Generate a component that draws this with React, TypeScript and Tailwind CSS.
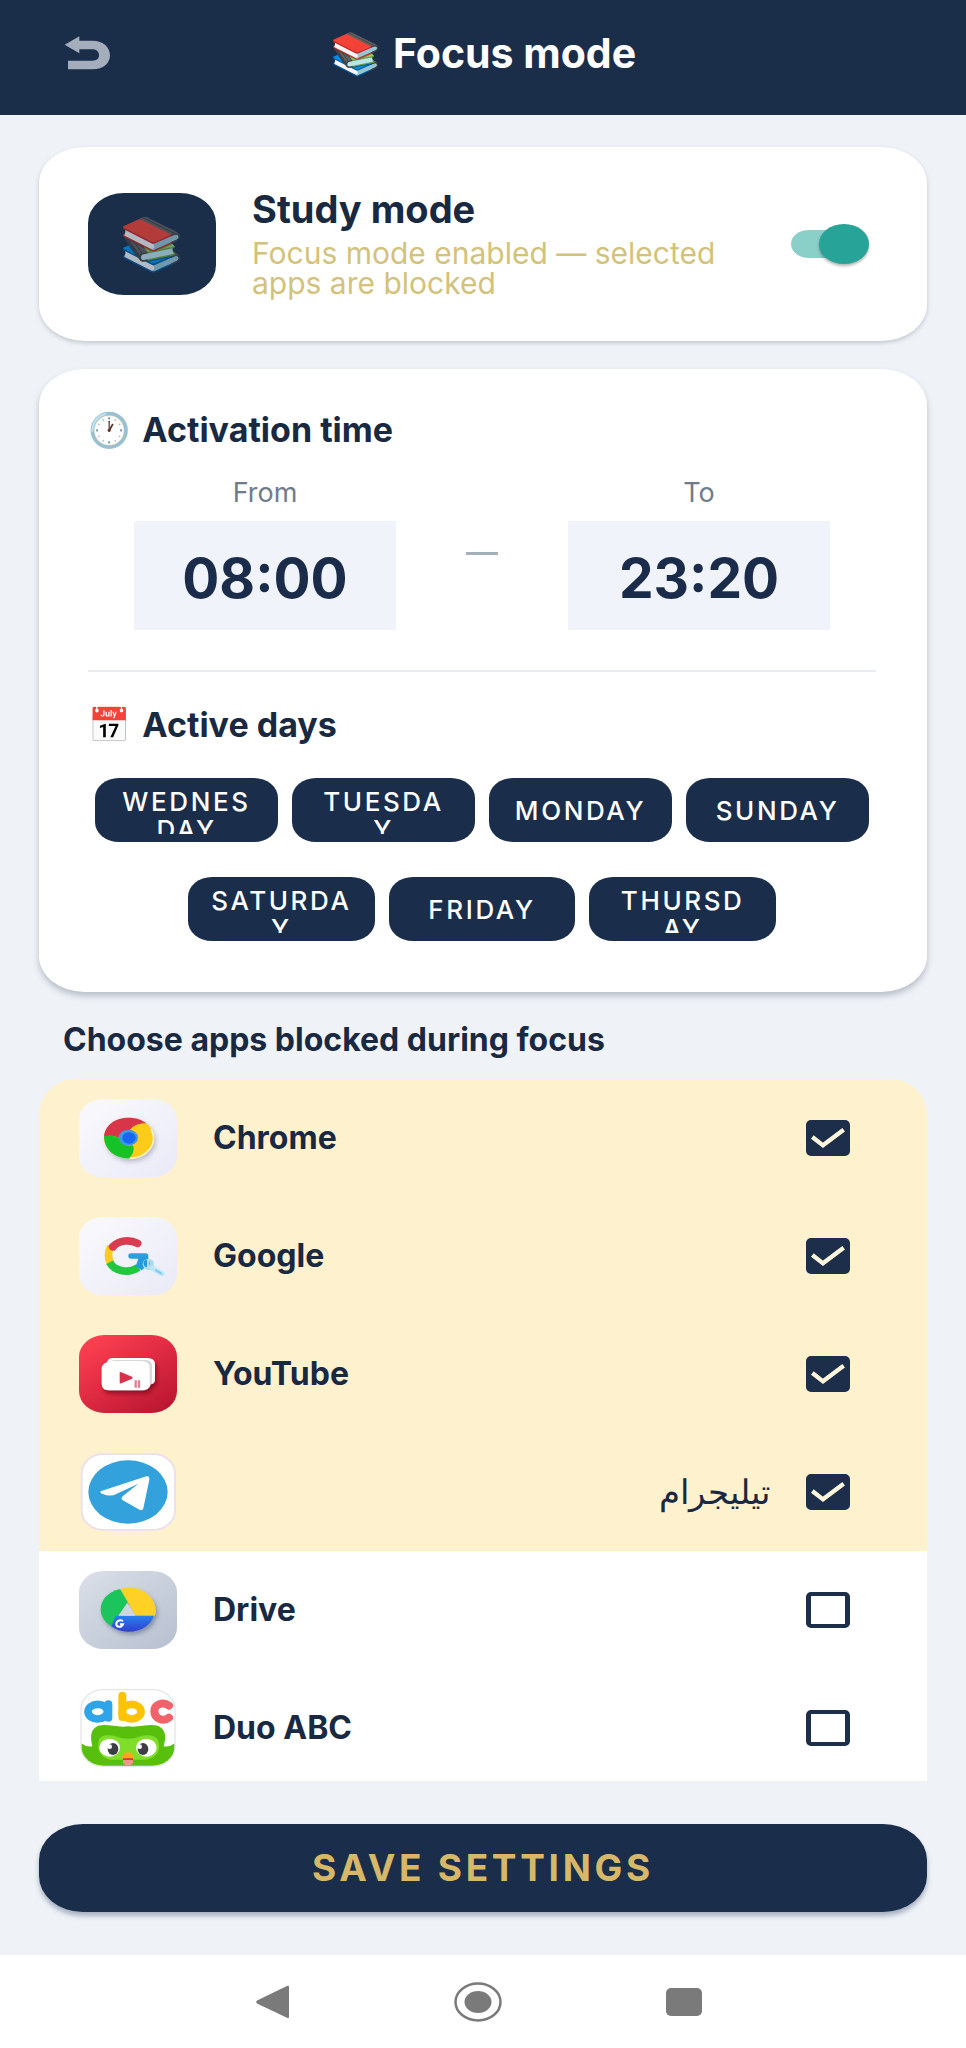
import { useState, type ReactNode } from "react";

type AppEntry = { id: string; name: ReactNode; rtl?: boolean; icon: ReactNode };

function BackIcon() {
  return (
    <svg viewBox="0 0 138 102" className="h-[34px] w-[46px]" aria-hidden="true">
      <path d="M2 26 46 1V14H86C118 14 138 34 138 58S118 100 86 100H12V74H84C99 74 105 68 105 58S99 40 84 40H46V52Z" fill="#a3adbc" />
    </svg>
  );
}

function ChromeIcon() {
  return (
    <svg viewBox="0 0 294 234" className="h-[78px] w-[98px]" aria-hidden="true">
      <defs>
        <linearGradient id="chromeTile" x1="0" y1="0" x2="1" y2="1">
          <stop offset="0" stopColor="#fafafd" />
          <stop offset="1" stopColor="#e9eaf6" />
        </linearGradient>
        <filter id="soft" x="-30%" y="-30%" width="170%" height="170%">
          <feDropShadow dx="7" dy="9" stdDeviation="8" floodColor="#6b6f90" floodOpacity="0.45" />
        </filter>
      </defs>
      <rect width="294" height="234" rx="72" ry="62" fill="url(#chromeTile)" />
      <g filter="url(#soft)">
        <ellipse cx="149" cy="117" rx="74" ry="61" fill="#fdc914" />
        <path d="M75 113C78 77 110 56 149 56 170 56 190 62 203 74 178 72 158 82 152 96L122 118C112 110 94 108 75 113Z" fill="#d9354a" />
        <path d="M75 112C94 108 112 110 122 118 126 136 140 143 162 139 168 153 160 170 150 178 108 178 76 154 75 112Z" fill="#14c228" />
      </g>
      <path d="M152 94C164 78 184 72 203 74 225 88 228 125 216 145 200 168 175 178 152 178 166 165 168 150 162 136Z" fill="#fdcb1a" />
      <path d="M216 90C232 120 222 150 192 168 178 176 166 178 152 178" fill="none" stroke="#fff3bd" strokeWidth="5" />
      <ellipse cx="148" cy="116" rx="29" ry="24" fill="#3f97ea" />
      <ellipse cx="150" cy="117" rx="20" ry="17" fill="#1767f2" />
    </svg>
  );
}

function GoogleIcon() {
  return (
    <svg viewBox="0 0 294 234" className="h-[78px] w-[98px]" aria-hidden="true">
      <defs>
        <linearGradient id="googleTile" x1="0" y1="0" x2="1" y2="1">
          <stop offset="0" stopColor="#fafafd" />
          <stop offset="1" stopColor="#e9eaf6" />
        </linearGradient>
      </defs>
      <rect width="294" height="234" rx="72" ry="62" fill="url(#googleTile)" />
      <g fill="none" strokeWidth="23">
        <path d="M95 88C87 105 86 122 94 138" stroke="#fccb22" />
        <path d="M92 136C106 163 148 171 178 151" stroke="#1fc83e" />
        <path d="M101 89C120 69 153 67 176 79" stroke="#d93b4f" strokeLinecap="round" />
      </g>
      <path d="M92 93 100 81 117 89 107 101Z" fill="#d93b4f" />
      <path d="M156 117H200" stroke="#2f9fdc" strokeWidth="16" strokeLinecap="round" />
      <path d="M180 120H208V142L188 160 170 148Z" fill="#249bdd" />
      <circle cx="208" cy="142" r="17" fill="#a6dcf4" />
      <ellipse cx="203" cy="139" rx="9" ry="11" fill="#2797df" />
      <path d="M207 128V151" stroke="#fff" strokeWidth="4" />
      <path d="M219 153 249 170" stroke="#bfe6f5" strokeWidth="15" strokeLinecap="round" />
      <path d="M231 160 246 169" stroke="#7cccec" strokeWidth="6" strokeLinecap="round" />
    </svg>
  );
}

function YouTubeIcon() {
  return (
    <svg viewBox="0 0 294 234" className="h-[78px] w-[98px]" aria-hidden="true">
      <defs>
        <linearGradient id="ytTile" x1="0.1" y1="0" x2="0.9" y2="1">
          <stop offset="0" stopColor="#ff4252" />
          <stop offset="0.5" stopColor="#de2a42" />
          <stop offset="1" stopColor="#b81530" />
        </linearGradient>
        <filter id="ytShadow" x="-30%" y="-30%" width="170%" height="190%">
          <feDropShadow dx="6" dy="10" stdDeviation="7" floodColor="#6a0018" floodOpacity="0.6" />
        </filter>
      </defs>
      <rect width="294" height="234" rx="76" ry="66" fill="url(#ytTile)" />
      <path d="M100 69H204Q228 69 228 88V133Q228 146 215 148Q210 166 190 166H92Q68 166 68 146V103Q68 86 84 82Q88 69 100 69Z" fill="#fff" filter="url(#ytShadow)" />
      <path d="M98 78H186Q212 78 212 98V147H219V94Q219 75 200 75H104Z" fill="#d8d8de" />
      <path d="M122 113Q122 110 127 112L159 125Q163 128 159 131L127 145Q122 147 122 142Z" fill="#d9314a" />
      <path d="M170 136V158M180 136V158" stroke="#e0808e" strokeWidth="7" />
    </svg>
  );
}

function TelegramIcon() {
  return (
    <svg viewBox="0 0 294 234" className="h-[78px] w-[98px]" aria-hidden="true">
      <rect x="8" y="3" width="280" height="228" rx="66" ry="58" fill="#fff" stroke="#ece1ea" strokeWidth="6" />
      <ellipse cx="147" cy="117" rx="119" ry="95" fill="#33a1dc" />
      <path d="M65 115 202 70Q212 68 211 80L193 166Q190 176 179 169L130 141Q125 136 131 130L178 92 110 124Q95 132 69 122Q61 118 65 115Z" fill="#fff" />
    </svg>
  );
}

function DriveIcon() {
  return (
    <svg viewBox="0 0 294 234" className="h-[78px] w-[98px]" aria-hidden="true">
      <defs>
        <linearGradient id="driveTile" x1="0" y1="0" x2="1" y2="1">
          <stop offset="0" stopColor="#dbe0e8" />
          <stop offset="1" stopColor="#b7c0d0" />
        </linearGradient>
        <linearGradient id="driveBlue" x1="0" y1="0" x2="0" y2="1">
          <stop offset="0" stopColor="#2b80ee" />
          <stop offset="1" stopColor="#2f3fd0" />
        </linearGradient>
        <filter id="driveShadow" x="-30%" y="-30%" width="170%" height="170%">
          <feDropShadow dx="6" dy="9" stdDeviation="7" floodColor="#4b5878" floodOpacity="0.5" />
        </filter>
      </defs>
      <rect width="294" height="234" rx="74" ry="64" fill="url(#driveTile)" />
      <g filter="url(#driveShadow)">
        <path d="M124 54C84 62 64 90 65 117 66 140 80 155 97 166L148 96Z" fill="#1fc45b" />
        <path d="M124 54Q134 50 150 50C195 50 230 80 230 122Q230 134 224 134H170Z" fill="#ffd128" />
        <path d="M110 134H224C218 160 188 182 148 182 128 182 110 176 97 166Z" fill="url(#driveBlue)" />
      </g>
      <path d="M145 95 169 134H118Z" fill="#cfd6df" />
      <path d="M132 150C122 144 111 151 112 160S127 171 132 160H123" fill="none" stroke="#fff" strokeWidth="6" />
    </svg>
  );
}

function DuoIcon() {
  return (
    <svg viewBox="0 0 294 234" className="h-[78px] w-[98px]" aria-hidden="true">
      <defs>
        <clipPath id="duoClip">
          <rect x="8" y="4" width="278" height="226" rx="66" ry="56" />
        </clipPath>
      </defs>
      <rect x="6" y="2" width="282" height="230" rx="68" ry="58" fill="#fff" stroke="#e6e4ec" strokeWidth="4" />
      <g clipPath="url(#duoClip)">
        <path d="M0 158Q22 176 40 172C34 148 34 126 48 116 72 98 112 118 147 112 182 118 222 98 246 116 262 128 260 148 254 172Q272 176 294 158V234H0Z" fill="#58bf0c" />
        <path d="M60 152C70 134 92 138 110 142 134 152 160 152 184 142 202 138 224 134 236 152 252 190 222 214 190 212H106C72 214 50 188 60 152Z" fill="#7ede2a" />
        <ellipse cx="92" cy="176" rx="31" ry="27" fill="#fff" />
        <ellipse cx="202" cy="176" rx="31" ry="27" fill="#fff" />
        <ellipse cx="102" cy="180" rx="16" ry="18" fill="#3d3d45" />
        <ellipse cx="192" cy="180" rx="16" ry="18" fill="#3d3d45" />
        <circle cx="92" cy="173" r="7" fill="#fff" />
        <circle cx="182" cy="173" r="7" fill="#fff" />
        <path d="M128 206Q132 190 147 190T166 206Q160 214 147 214T128 206Z" fill="#f8a820" />
        <path d="M132 208H162V220Q160 230 147 230T132 220Z" fill="#f4958a" />
        <path d="M132 208H162V213H132Z" fill="#d9342e" />
      </g>
      <g fill="none" strokeWidth="24" strokeLinecap="round">
        <ellipse cx="56" cy="68" rx="29" ry="22" stroke="#2fa4e8" strokeWidth="23" />
        <path d="M88 46V86" stroke="#2fa4e8" />
        <path d="M130 20V84" stroke="#fcc400" />
        <ellipse cx="158" cy="68" rx="28" ry="22" stroke="#fcc400" strokeWidth="23" />
        <path d="M270 50C252 36 226 46 226 67S252 100 270 86" stroke="#f2626b" />
      </g>
    </svg>
  );
}

const apps: AppEntry[] = [
  { id: "chrome", name: "Chrome", icon: <ChromeIcon /> },
  { id: "google", name: "Google", icon: <GoogleIcon /> },
  { id: "youtube", name: "YouTube", icon: <YouTubeIcon /> },
  { id: "telegram", name: "تيليجرام", rtl: true, icon: <TelegramIcon /> },
  { id: "drive", name: "Drive", icon: <DriveIcon /> },
  { id: "duo", name: "Duo ABC", icon: <DuoIcon /> },
];

function DayChip({ children }: { children: ReactNode }) {
  return (
    <button
      type="button"
      aria-pressed="true"
      className="flex h-16 w-full rounded-[24px/20px] bg-[#1a2e4b] px-3 pb-2 pt-[10px] text-[26px] font-medium leading-[28px] tracking-widest text-white"
    >
      <span className="flex h-full w-full items-center justify-center overflow-hidden">
        <span className="max-h-full">{children}</span>
      </span>
    </button>
  );
}

function TimeField({ id, label, value }: { id: string; label: string; value: string }) {
  return (
    <div className="flex w-[262px] flex-col">
      <label htmlFor={id} className="text-center text-[27px] leading-[32px] text-[#6f7c8b]">
        {label}
      </label>
      <input
        id={id}
        defaultValue={value}
        className="mt-3 h-[109px] w-full bg-[#f0f3f9] pt-1 text-center text-[55px] font-bold text-[#1a2c4a] outline-none"
      />
    </div>
  );
}

function AppRow({ app, checked, onToggle }: { app: AppEntry; checked: boolean; onToggle: () => void }) {
  return (
    <li className={checked ? "bg-[#fef2ce]" : "bg-white"}>
      <label className="flex h-[118px] items-center pl-10 pr-[77px]">
        {app.icon}
        {app.rtl ? (
          <span dir="rtl" lang="ar" className="ml-9 flex-1 text-[34px] font-medium leading-[40px]">
            {app.name}
          </span>
        ) : (
          <span className="ml-9 flex-1 text-[32px] font-bold leading-[40px]">{app.name}</span>
        )}
        <span className="ml-9 grid h-9 w-11">
          <input
            type="checkbox"
            checked={checked}
            onChange={onToggle}
            className="col-start-1 row-start-1 appearance-none rounded-[5px] border-x-[5px] border-y-4 border-[#1d2e4a] checked:bg-[#1d2e4a]"
          />
          {checked && (
            <svg viewBox="0 0 132 108" className="pointer-events-none col-start-1 row-start-1 h-9 w-11" aria-hidden="true">
              <path d="M19 51 51 76 113 29" fill="none" stroke="#fef6dc" strokeWidth="13" />
            </svg>
          )}
        </span>
      </label>
    </li>
  );
}

export default function App() {
  const [enabled, setEnabled] = useState(true);
  const [blocked, setBlocked] = useState<string[]>(["chrome", "google", "youtube", "telegram"]);
  const toggle = (id: string) =>
    setBlocked((b) => (b.includes(id) ? b.filter((x) => x !== id) : [...b, id]));

  return (
    <div className="flex h-screen flex-col bg-[#eff3f8] font-['Inter','Noto_Color_Emoji',sans-serif] text-[#1a2942]">
      <header className="grid h-[115px] shrink-0 grid-cols-[1fr_auto_1fr] items-center bg-[#1a2e4a] px-16 pb-[10px]">
        <button type="button" aria-label="Back" className="w-[46px]">
          <BackIcon />
        </button>
        <h1 className="flex items-center gap-3 text-[41px] font-bold leading-[48px] text-white">
          <span>📚</span>
          <span>Focus mode</span>
        </h1>
      </header>

      <main className="flex min-h-0 flex-1 flex-col px-[39px] pt-8">
        <section className="flex shrink-0 items-center rounded-[46px/36px] bg-white py-[43px] pl-[49px] pr-[58px] shadow-[0_2px_4px_rgba(60,70,90,0.25)]">
          <div className="flex h-[102px] w-32 shrink-0 items-center justify-center rounded-[36px/30px] bg-[#1a2e4a] text-[52px] leading-none">
            <span className="opacity-70">📚</span>
          </div>
          <div className="ml-9 flex-1">
            <h2 id="study-label" className="text-[38px] font-bold leading-[38px]">Study mode</h2>
            <p className="mt-[10px] max-w-[490px] text-[30px] leading-[30px] text-[#d3c27a]">
              Focus mode enabled — selected apps are blocked
            </p>
          </div>
          <label className="relative h-10 w-[78px] shrink-0">
            <input
              type="checkbox"
              role="switch"
              aria-labelledby="study-label"
              checked={enabled}
              onChange={() => setEnabled(!enabled)}
              className="peer absolute inset-x-0 top-[6px] h-7 w-[70px] appearance-none rounded-[18px/14px] bg-slate-300 checked:bg-[#8acfc8]"
            />
            <span className="pointer-events-none absolute left-0 top-0 h-10 w-[50px] rounded-[50%] bg-slate-100 shadow-[0_2px_3px_rgba(0,0,0,0.3)] peer-checked:left-[28px] peer-checked:bg-[#27a398]" />
          </label>
        </section>

        <section className="mt-7 shrink-0 rounded-[46px/36px] bg-white pb-[51px] pl-[49px] pr-[51px] pt-10 shadow-[0_4px_6px_rgba(60,70,90,0.3)]">
          <h2 className="flex items-center gap-3 text-[34px] font-bold leading-[42px]">
            <span>🕐</span>
            <span>Activation time</span>
          </h2>
          <div className="mt-[26px] flex items-center justify-between px-[46px]">
            <TimeField id="from" label="From" value="08:00" />
            <span className="h-[3px] w-8 bg-[#a3b0b5]" />
            <TimeField id="to" label="To" value="23:20" />
          </div>
          <hr className="mt-10 border-t-2 border-[#e9ecf0]" />
          <h2 className="mt-8 flex items-center gap-3 text-[34px] font-bold leading-[42px]">
            <span>📅</span>
            <span>Active days</span>
          </h2>
          <div className="mt-8 grid grid-cols-4 gap-x-[14px] px-[7px]">
            <DayChip>WEDNES<br />DAY</DayChip>
            <DayChip>TUESDA<br />Y</DayChip>
            <DayChip>MONDAY</DayChip>
            <DayChip>SUNDAY</DayChip>
          </div>
          <div className="mt-[35px] grid grid-cols-3 gap-x-[14px] px-[100px]">
            <DayChip>SATURDA<br />Y</DayChip>
            <DayChip>FRIDAY</DayChip>
            <DayChip>THURSD<br />AY</DayChip>
          </div>
        </section>

        <h2 className="mt-7 shrink-0 px-6 text-[32px] font-bold leading-[40px]">Choose apps blocked during focus</h2>

        <ul className="mt-[19px] min-h-0 flex-1 overflow-y-auto rounded-t-[36px] bg-white [scrollbar-width:none]">
          {apps.map((app) => (
            <AppRow key={app.id} app={app} checked={blocked.includes(app.id)} onToggle={() => toggle(app.id)} />
          ))}
        </ul>

        <button
          type="button"
          className="mb-[43px] mt-[43px] h-[88px] shrink-0 rounded-[44px/36px] bg-[#1a2e4b] text-[37px] font-bold tracking-widest text-[#d6b868] shadow-[0_4px_5px_rgba(60,75,110,0.4)]"
        >
          SAVE SETTINGS
        </button>
      </main>

      <nav className="flex h-[93px] shrink-0 items-center justify-center gap-[163px] bg-white pr-2">
        <button type="button" aria-label="Back">
          <svg viewBox="0 0 34 34" className="size-[34px]" aria-hidden="true">
            <path d="M1 15.500 31.500 0.800Q33 0.500 33 2V32Q33 33.500 31.500 33L1 18.500Q-0.500 17 1 15.500Z" fill="#7a7a7a" />
          </svg>
        </button>
        <button type="button" aria-label="Home">
          <svg viewBox="0 0 50 40" className="h-10 w-[50px]" aria-hidden="true">
            <ellipse cx="25" cy="20" rx="22.500" ry="18.500" fill="none" stroke="#7a7a7a" strokeWidth="2.500" />
            <ellipse cx="25" cy="20" rx="13.500" ry="11" fill="#7a7a7a" />
          </svg>
        </button>
        <button type="button" aria-label="Recent apps">
          <svg viewBox="0 0 36 28" className="h-7 w-9" aria-hidden="true">
            <rect width="36" height="28" rx="5" fill="#7a7a7a" />
          </svg>
        </button>
      </nav>
    </div>
  );
}
